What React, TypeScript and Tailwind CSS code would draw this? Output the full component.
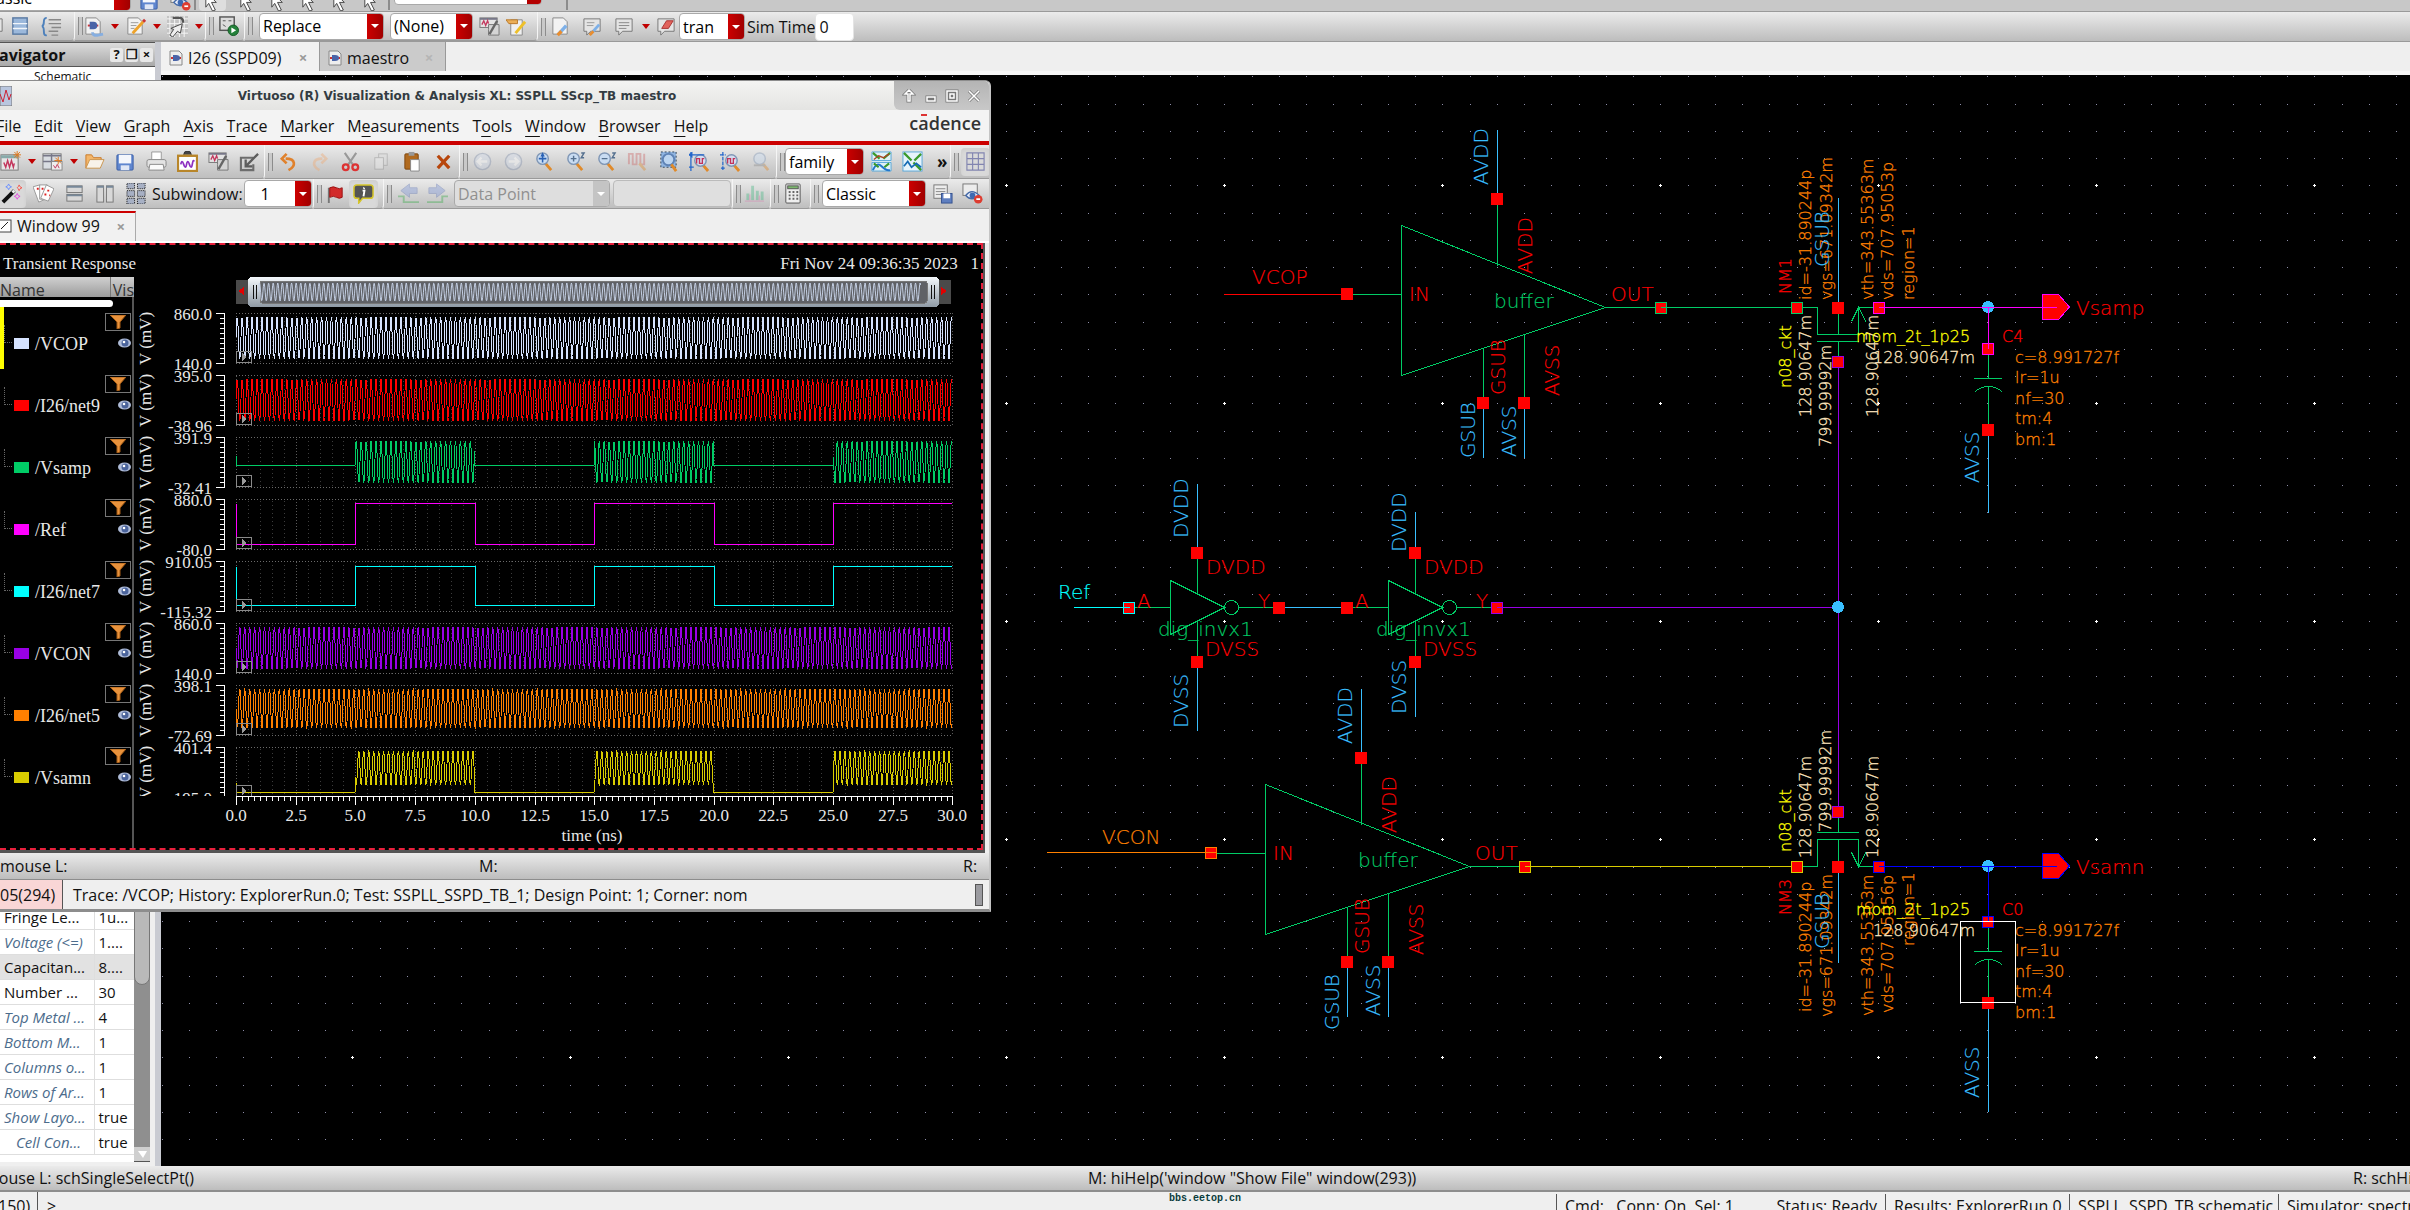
import type { ReactNode } from "react";
import clsx from "clsx";

/* ---------- colours of the drawing layers ---------- */

const GREEN = "#00cc66";
const SKY = "#39bfff";
const RED = "#ff0000";
const PURPLE = "#9900e6";
const MAGENTA = "#ff00ff";
const OLIVE = "#d9cc00";
const ORANGE = "#ff8000";
const CREAM = "#ffe6bf";
const YELLOW = "#ffff00";
const CYAN = "#00ffff";
const BLUE = "#0000ff";

const uiFont = "font-['Open_Sans','Noto_Sans',sans-serif]";
const plotFont = "font-['Liberation_Serif',serif]";
const barBg = "bg-linear-to-b from-[#ebebeb] to-[#bdbdbd]";

/* ---------- icons ---------- */

const Svg = ({ children, faded }: { children: ReactNode; faded?: boolean }) => (
  <svg
    viewBox="0 0 22 22"
    className={clsx("h-[21px] w-[21px] shrink-0", faded && "opacity-40")}
    fill="none"
    aria-hidden="true"
  >
    {children}
  </svg>
);

const Lens = ({ children }: { children?: ReactNode }) => (
  <>
    <path d="M12 13l6 7" stroke="#e08a2a" strokeWidth="3" />
    <circle cx="9" cy="8" r="6" fill="#c9dcf2" stroke="#7f96b5" strokeWidth="1.5" />
    {children}
  </>
);

const Page = ({ children }: { children?: ReactNode }) => (
  <>
    <path d="M3 2h11l4 4v13H3z" fill="#f2f2f2" stroke="#888" />
    {children}
  </>
);

const Cursor = () => <path d="M4 2l11 11h-5l4 8-3 1-4-8-3 4z" fill="#fff" stroke="#444" />;

const icons: Record<string, ReactNode> = {
  newWindow: (
    <>
      <rect x="1" y="4" width="18" height="16" fill="#e6e6e6" stroke="#777" />
      <path d="M1 6h18" stroke="#8aa" strokeWidth="3" />
      <path d="M4 12l2 5 2-7 2 7 2-7 2 7 1-4" stroke="#c3375d" strokeWidth="1.5" />
      <path d="M18 0v8M14 4h8M15 1l6 6M21 1l-6 6" stroke="#e07a20" />
    </>
  ),
  newSub: (
    <>
      <rect x="1" y="3" width="19" height="16" fill="#d9dde2" stroke="#777" />
      <path d="M1 5h19M1 11h19M10 3v16" stroke="#778" strokeWidth="1.5" />
      <rect x="10" y="11" width="11" height="9" fill="#eee" stroke="#888" />
      <path d="M12 15l2 3 2-4 2 4" stroke="#c3375d" />
      <path d="M17 6v8M13 10h8M14 7l6 6" stroke="#e07a20" />
    </>
  ),
  folder: (
    <>
      <path d="M2 18V4h6l2 3h8v4" fill="#f3b66b" stroke="#c97b2a" />
      <path d="M2 18L6 9h15l-4 9z" fill="#f8f3ea" stroke="#c9954f" />
    </>
  ),
  save: (
    <>
      <rect x="2" y="4" width="17" height="16" rx="1" fill="#5f86cf" stroke="#3b5ea6" />
      <rect x="4" y="4" width="13" height="9" fill="#f4f6fb" />
      <rect x="6" y="15" width="9" height="5" fill="#dfe6f5" />
    </>
  ),
  print: (
    <>
      <path d="M6 9V1h10v8" fill="#fff" stroke="#999" />
      <rect x="1" y="9" width="20" height="8" rx="2" fill="#e3e3e3" stroke="#888" />
      <path d="M4 14h14l1 6H3z" fill="#fafafa" stroke="#888" />
    </>
  ),
  clipWave: (
    <>
      <path d="M7 4a4 4 0 018 0" fill="#444" stroke="#333" />
      <rect x="1" y="5" width="20" height="16" fill="#fff" stroke="#b8862a" strokeWidth="2.5" />
      <path d="M4 14q1-6 3 0t3 0 3 0 3 0 2-3" stroke="#8d2fc0" strokeWidth="1.8" />
    </>
  ),
  wavePen: (
    <>
      <rect x="1" y="2" width="18" height="10" fill="#e4e4e4" stroke="#777" />
      <path d="M1 3h18" stroke="#778" strokeWidth="2" />
      <path d="M3 9l2-4 2 5 2-5 1 3" stroke="#c3375d" strokeWidth="1.4" />
      <path d="M10 14V9h11v11H10z" fill="#d5d5d5" stroke="#777" />
      <path d="M19 5l-8 14" stroke="#666" strokeWidth="2.5" />
    </>
  ),
  resize: (
    <>
      <path d="M15 7H2v13h13v-6" stroke="#6d6d6d" strokeWidth="2.2" />
      <path d="M20 3l-12 12M7 9v7h7" stroke="#5d5d5d" strokeWidth="2.4" />
    </>
  ),
  undo: <path d="M11 20c8-4 8-12-3-12M9 3L4 8l5 5" stroke="#e0812c" strokeWidth="2.8" />,
  redo: <path d="M11 20c-8-4-8-12 3-12M13 3l5 5-5 5" stroke="#f0a870" strokeWidth="2.8" />,
  cut: (
    <>
      <path d="M5 2l9 13M17 2L8 15" stroke="#999" strokeWidth="2.2" />
      <circle cx="6" cy="17" r="3" stroke="#d33" strokeWidth="2.4" />
      <circle cx="16" cy="17" r="3" stroke="#d33" strokeWidth="2.4" />
    </>
  ),
  copy: (
    <>
      <rect x="8" y="3" width="9" height="12" fill="#ddd" stroke="#888" />
      <rect x="4" y="7" width="9" height="12" fill="#eee" stroke="#888" />
    </>
  ),
  paste: (
    <>
      <rect x="3" y="3" width="14" height="16" rx="1" fill="#b06a1f" stroke="#7d4610" />
      <rect x="7" y="1" width="6" height="4" fill="#999" />
      <path d="M9 9h9v12H9z" fill="#fff" stroke="#888" />
    </>
  ),
  remove: <path d="M5 5l12 13M17 5L5 18" stroke="#b8460c" strokeWidth="3.4" />,
  back: (
    <>
      <circle cx="11" cy="11" r="8.5" fill="#cfd8e8" stroke="#7f8eaa" strokeWidth="1.5" />
      <path d="M16 11H7M10 7l-4 4 4 4" stroke="#fff" strokeWidth="2.4" />
    </>
  ),
  forward: (
    <>
      <circle cx="11" cy="11" r="8.5" fill="#cfd8e8" stroke="#7f8eaa" strokeWidth="1.5" />
      <path d="M6 11h9M12 7l4 4-4 4" stroke="#fff" strokeWidth="2.4" />
    </>
  ),
  fit: <Lens><path d="M9 4v8M5 8h8M9 3l-1 2h2z" stroke="#2a62b5" strokeWidth="1.6" /></Lens>,
  zoomIn: <Lens><path d="M9 5v6M6 8h6M17 2h3l-3 5h3" stroke="#55708f" strokeWidth="1.5" /></Lens>,
  zoomOut: <Lens><path d="M6 8h6M17 2h3l-3 5h3" stroke="#55708f" strokeWidth="1.5" /></Lens>,
  waves: (
    <>
      <path d="M2 14V3h4v11h4V3h4v11h4V3" stroke="#c66" strokeWidth="2" />
      <path d="M13 13l6 7" stroke="#e08a2a" strokeWidth="3" />
    </>
  ),
  zoomBox: (
    <>
      <rect x="3" y="1" width="16" height="16" fill="#8fb4e0" stroke="#345" strokeDasharray="2 2" />
      <circle cx="11" cy="9" r="6" fill="#bcd5f0" stroke="#5f83b5" strokeWidth="2" />
      <path d="M14 14l5 7" stroke="#e08a2a" strokeWidth="3" />
    </>
  ),
  zoomX: (
    <>
      <path d="M14 14l6 7" stroke="#e08a2a" strokeWidth="3" />
      <circle cx="12" cy="10" r="6" fill="#d5dcee" stroke="#7f96b5" strokeWidth="1.5" />
      <path d="M8 13V8h3v5h3V8h2" stroke="#c2335a" strokeWidth="1.4" />
      <path d="M2 1v20M0 4h16M0 4l3-2v4zM0 17h5" stroke="#26c" strokeWidth="1.3" />
    </>
  ),
  zoomY: (
    <>
      <path d="M14 14l6 7" stroke="#e08a2a" strokeWidth="3" />
      <circle cx="12" cy="10" r="6" fill="#d5dcee" stroke="#7f96b5" strokeWidth="1.5" />
      <path d="M8 13V8h3v5h3V8h2" stroke="#c2335a" strokeWidth="1.4" />
      <path d="M3 1v20M0 4h6M1 18h5" stroke="#26c" strokeWidth="1.3" strokeDasharray="4 1" />
    </>
  ),
  zoomHand: <Lens><path d="M3 15h12" stroke="#888" strokeWidth="2" /></Lens>,
  cross: (
    <>
      <rect x="1" y="1" width="20" height="20" fill="#dff0f6" />
      <path d="M1 1h20v9H1zM1 12h20v9H1z" stroke="#58a7d8" />
      <path d="M2 2l7 6M20 2l-7 6" stroke="#3a9a2c" strokeWidth="2.2" />
      <path d="M3 9l5-4 5 2 6-4" stroke="#a42" strokeWidth="1.4" />
      <path d="M2 20q4-9 9-4t9 4" stroke="#27c" strokeWidth="2" />
      <path d="M3 13l5 4M19 13l-5 4" stroke="#3a9a2c" strokeWidth="2.2" />
    </>
  ),
  merge: (
    <>
      <rect x="1" y="1" width="20" height="20" fill="#e6f3fb" stroke="#58a7d8" />
      <path d="M2 2l8 8M20 20l-8-8M20 3l-7 7" stroke="#3a9a2c" strokeWidth="2.4" />
      <path d="M2 16l4-5 4 6 5-4 5 4" stroke="#146bb5" strokeWidth="1.8" />
    </>
  ),
  grid: (
    <path d="M2 2h18v18H2zM8 2v18M14 2v18M2 8h18M2 14h18" stroke="#8285b0" strokeWidth="1.2" />
  ),
  wand: (
    <>
      <path d="M2 20L14 8" stroke="#111" strokeWidth="4" />
      <path d="M12 10l2-2" stroke="#eee" strokeWidth="3" />
      <path d="M8 1l1 2 2 1-2 1-1 2-1-2-2-1 2-1z" stroke="#6a8fff" />
      <path d="M19 2l1 2 2 1-2 1-1 2-1-2-1-1 1-1z" stroke="#f4584f" />
      <path d="M17 11l1 2 2 1-2 1-1 2-1-2-2-1 2-1z" stroke="#e34ae0" />
    </>
  ),
  cards: (
    <>
      <path d="M0 4l7-2 6 15-7 3z" fill="#fff" stroke="#999" />
      <path d="M7 2h8v15H7z" fill="#fff" stroke="#999" />
      <path d="M14 2l8 4-6 13-8-3z" fill="#fff" stroke="#999" />
      <path d="M4 6h2M9 6h2M15 8h2M12 12h2M17 13h1" stroke="#d22" strokeWidth="2" />
    </>
  ),
  rows: (
    <>
      <rect x="3" y="3" width="16" height="7" fill="#d8d8d8" stroke="#777" />
      <rect x="3" y="12" width="16" height="7" fill="#d8d8d8" stroke="#777" />
      <path d="M3 4h16M3 13h16" stroke="#789" strokeWidth="2" />
    </>
  ),
  cols: (
    <>
      <rect x="2" y="3" width="7" height="17" fill="#d8d8d8" stroke="#777" />
      <rect x="12" y="3" width="7" height="17" fill="#d8d8d8" stroke="#777" />
      <path d="M2 4h7M12 4h7" stroke="#789" strokeWidth="2" />
    </>
  ),
  tiles: (
    <g fill="#a7b0c4" stroke="#111" strokeDasharray="1 1">
      <rect x="1" y="0" width="8" height="6" />
      <rect x="12" y="0" width="8" height="6" />
      <rect x="1" y="8" width="8" height="6" />
      <rect x="12" y="8" width="8" height="6" />
      <rect x="1" y="16" width="8" height="6" />
      <rect x="12" y="16" width="8" height="6" />
    </g>
  ),
  flag: (
    <>
      <path d="M4 5v16" stroke="#777" strokeWidth="2" />
      <path d="M5 5q4-2 7 0t6 0v10q-3 2-6 0t-7 0z" fill="#d22a2a" stroke="#911" />
    </>
  ),
  info: (
    <>
      <path d="M4 2h14q3 0 3 3v8q0 3-3 3h-8l-4 5v-5H4q-3 0-3-3V5q0-3 3-3z" fill="#545454" stroke="#d5c52a" strokeWidth="1.6" />
      <path d="M12 5l-1 1M10 8h2l-1 6" stroke="#fff" strokeWidth="2" />
    </>
  ),
  stepLeft: (
    <>
      <path d="M20 5h-8V1L3 8l9 7v-4h8z" fill="#7f97d8" stroke="#5e74b5" />
      <path d="M0 14h6v6h16" stroke="#3bab4b" strokeWidth="2" />
    </>
  ),
  stepRight: (
    <>
      <path d="M2 5h8V1l9 7-9 7v-4H2z" fill="#7f97d8" stroke="#5e74b5" />
      <path d="M0 20h16v-6h6" stroke="#3bab4b" strokeWidth="2" />
    </>
  ),
  bars: (
    <>
      <path d="M4 18v-7M9 18V3M14 18V8M19 18v-9" stroke="#48b884" strokeWidth="3" />
      <path d="M1 19h20M6 18v-6M16 18v-5" stroke="#d87cae" strokeWidth="1.5" />
    </>
  ),
  calc: (
    <>
      <rect x="4" y="1" width="15" height="20" rx="1" fill="#eee" stroke="#555" />
      <rect x="6" y="3" width="11" height="3" fill="#7cb86e" stroke="#555" />
      <path d="M7 9.500h10M7 13h10M7 16.500h10" stroke="#666" strokeWidth="2" strokeDasharray="2 2" />
    </>
  ),
  listSave: (
    <>
      <rect x="2" y="2" width="14" height="14" fill="#ececec" stroke="#777" />
      <path d="M4 6h10M4 9h10M4 12h6" stroke="#888" />
      <rect x="10" y="11" width="11" height="10" fill="#5f7fc0" stroke="#35528f" />
      <rect x="12" y="11" width="7" height="5" fill="#fff" />
    </>
  ),
  eyeRemove: (
    <>
      <rect x="1" y="1" width="15" height="12" fill="#ececec" stroke="#777" />
      <path d="M4 13q6-8 14 0-8 7-14 0z" fill="#e8eefb" stroke="#466ba8" strokeWidth="1.5" />
      <circle cx="11" cy="13" r="3" fill="#3e6ab2" />
      <circle cx="17" cy="17" r="4.500" fill="#dd3c30" />
      <path d="M15 17h4" stroke="#fff" strokeWidth="1.8" />
    </>
  ),
  layers: (
    <>
      <rect x="3" y="2" width="15" height="17" fill="#9bb8db" stroke="#5a7aa3" strokeWidth="1.5" />
      <path d="M3 8h15M3 13h15" stroke="#f1f5fa" strokeWidth="1.5" />
    </>
  ),
  braces: (
    <>
      <path d="M6 2Q3 2 3 6t-2 5q2 0 2 5t3 4" stroke="#4d80bb" strokeWidth="2" />
      <path d="M8 4h13M8 8h13M11 12h10M8 16h10M11 20h7" stroke="#888" strokeWidth="1.5" />
    </>
  ),
  schematic: (
    <Page>
      <path d="M5 10h11" stroke="#c33" strokeWidth="2" />
      <path d="M7 6h4q4 0 4 4t-4 4H7z" fill="#4a64a8" />
      <path d="M10 17q0 4 6 3l5-1" stroke="#86aee0" strokeWidth="3" />
    </Page>
  ),
  pagePen: (
    <Page>
      <path d="M6 7h8M6 10h6M6 13h4" stroke="#999" />
      <path d="M19 6L8 18" stroke="#eea32a" strokeWidth="3" />
      <path d="M19 6l2-2" stroke="#c33" strokeWidth="3" />
    </Page>
  ),
  gridCursor: (
    <>
      <rect width="22" height="22" fill="#c4c4c4" />
      <path d="M0 3h22M0 8h22M0 13h22M0 18h22M3 0v22M8 0v22M13 0v22M18 0v22" stroke="#f7f7f7" />
      <path d="M6 2h7q4 0 4 5" stroke="#555" strokeWidth="2.5" />
      <path d="M3 20l4-6-3-1 12-5-2 10-3-2-5 6z" fill="#eee" stroke="#444" />
    </>
  ),
  play: (
    <>
      <rect x="2" y="1" width="15" height="14" fill="#dcdcdc" stroke="#555" strokeWidth="1.5" />
      <path d="M5 5h3M11 5h3M5 9l3 2" stroke="#555" />
      <circle cx="16" cy="15" r="5.500" fill="#24813a" stroke="#145a24" />
      <path d="M14 12l5 3-5 3z" fill="#fff" />
    </>
  ),
  pageStar: (
    <>
      <path d="M5 4h12v16H5z" fill="#f0f0f0" stroke="#888" />
      <path d="M0 4h12v4H3z" fill="#ecaf58" stroke="#b9792a" />
      <path d="M20 6L10 18" stroke="#eec02a" strokeWidth="3" />
    </>
  ),
  wrench: (
    <Page>
      <path d="M9 19l8-9" stroke="#7db0e8" strokeWidth="3.500" />
      <path d="M8 20l4-4" stroke="#e98d2e" strokeWidth="3.500" />
    </Page>
  ),
  chatWrench: (
    <>
      <path d="M2 3h17v13H9l-4 4v-4H2z" fill="#e4e4e4" stroke="#777" />
      <path d="M5 7h8M5 10h7" stroke="#999" />
      <path d="M9 19l9-10" stroke="#7db0e8" strokeWidth="3" />
      <path d="M8 20l4-4" stroke="#e98d2e" strokeWidth="3" />
    </>
  ),
  chat: (
    <>
      <path d="M2 3h17v13H9l-4 4v-4H2z" fill="#e4e4e4" stroke="#777" />
      <path d="M5 7h11M5 10h11M5 13h8" stroke="#888" />
    </>
  ),
  eraser: (
    <>
      <path d="M2 3h17v13H9l-4 4v-4H2z" fill="#e4e4e4" stroke="#777" />
      <path d="M6 13l5-8h7l-5 8z" fill="#e2635c" stroke="#a33" />
    </>
  ),
  cursor: <Cursor />,
};

const Icon = ({ name, faded }: { name: string; faded?: boolean }) => (
  <Svg faded={faded}>{icons[name]}</Svg>
);

const IconButton = ({ name, faded, pressed }: { name: string; faded?: boolean; pressed?: boolean }) => (
  <button
    type="button"
    aria-label={name}
    className={clsx(
      "flex shrink-0 items-center justify-center",
      pressed && "h-[28px] w-[29px] rounded bg-[#d9d9d9] shadow-inner"
    )}
  >
    <Icon name={name} faded={faded} />
  </button>
);

const MenuCaret = () => (
  <button type="button" aria-label="more" className="flex w-[21px] shrink-0 justify-center">
    <svg viewBox="0 0 8 5" className="h-[5px] w-[8px]">
      <path d="M0 0h8L4 5z" fill="#c00000" />
    </svg>
  </button>
);

const Handle = () => (
  <span className="h-[18px] w-[5px] shrink-0 border-x border-[#8c8c8c] bg-[#c9c9c9]" />
);

const Group = ({ className, children }: { className?: string; children: ReactNode }) => (
  <div
    className={clsx(
      "flex shrink-0 items-center rounded-br border-r border-b border-[#9a9a9a] border-r-[#f5f5f5]",
      className
    )}
  >
    {children}
  </div>
);

const Combo = ({
  label,
  value,
  className,
  disabled,
}: {
  label: string;
  value: string;
  className: string;
  disabled?: boolean;
}) => (
  <div
    className={clsx(
      "flex h-[27px] shrink-0 overflow-hidden rounded border border-[#a9a9a9]",
      disabled ? "bg-[#dedede]" : "bg-white",
      className
    )}
  >
    <select
      aria-label={label}
      disabled={disabled}
      className={clsx(
        "min-w-0 flex-1 appearance-none bg-transparent pl-[3px] text-[16px] leading-[24px] outline-none",
        disabled ? "text-[#909090]" : "text-black"
      )}
    >
      <option>{value}</option>
    </select>
    <span
      className={clsx(
        "flex w-[16px] items-center justify-center",
        disabled ? "bg-[#c4c4c4]" : "bg-linear-to-r from-[#cc0000] to-[#a00000]"
      )}
    >
      <svg viewBox="0 0 8 4" className="h-[4px] w-[8px]">
        <path d="M0 0h8L4 4z" fill="#fff" />
      </svg>
    </span>
  </div>
);

/* ---------- main window chrome ---------- */

const TopToolbar = () => (
  <div className="flex h-[12px] items-end overflow-hidden border-b border-[#9a9a9a] bg-[#c8c8c8]">
    <div className="-ml-[22px] flex shrink-0">
      <Combo label="Workspace" value="Classic" className="w-[153px]" />
    </div>
    <div className="ml-[8px] flex shrink-0 items-end gap-[10px]">
      <Icon name="save" />
      <Icon name="eyeRemove" />
    </div>
    <span className="ml-[3px]"><Handle /></span>
    <span className="mx-[3px] shrink-0 rounded-b bg-[#dedede] px-[3px]"><Icon name="cursor" /></span>
    <div className="ml-[8px] flex shrink-0 gap-[10px]">
      <Icon name="cursor" />
      <Icon name="cursor" />
      <Icon name="cursor" />
      <Icon name="cursor" />
      <Icon name="cursor" />
    </div>
    <span className="mr-[4px] ml-[6px]"><Handle /></span>
    <div className="mb-[6px] flex h-[27px] w-[148px] shrink-0 items-center overflow-hidden rounded-b border border-[#a9a9a9] bg-white">
      <input
        aria-label="Search"
        placeholder="Search"
        className="w-full min-w-0 pl-[20px] text-[16px] outline-none placeholder:text-[#b5b5b5]"
      />
      <span className="h-full w-[14px] shrink-0 bg-[#b40000]" />
    </div>
    <span className="ml-[24px]"><Handle /></span>
  </div>
);

const MainToolbar = () => (
  <div className={clsx("flex h-[30px] border-b border-[#9a9a9a]", barBg)}>
    <Group className="w-[75px] gap-[10px] overflow-hidden">
      <span className="-mr-[5px] -ml-[16px] flex"><IconButton name="chat" /></span>
      <IconButton name="layers" />
      <IconButton name="braces" />
    </Group>
    <Group className="w-[131px] pl-[3px]">
      <Handle />
      <span className="w-[4px]" />
      <IconButton name="schematic" />
      <MenuCaret />
      <IconButton name="pagePen" />
      <MenuCaret />
      <IconButton name="gridCursor" />
      <MenuCaret />
    </Group>
    <Group className="w-[39px] gap-[4px] pl-[3px]">
      <Handle />
      <IconButton name="play" />
    </Group>
    <Group className="w-[293px] gap-[6px] pl-[3px]">
      <Handle />
      <Combo label="Results mode" value="Replace" className="w-[125px]" />
      <Combo label="History" value="(None)" className="w-[83px]" />
      <IconButton name="wavePen" />
      <IconButton name="pageStar" />
    </Group>
    <div className="flex flex-1 items-center pl-[3px]">
      <Handle />
      <div className="ml-[4px] flex gap-[11px]">
        <IconButton name="wrench" />
        <IconButton name="chatWrench" />
        <IconButton name="chat" />
      </div>
      <MenuCaret />
      <IconButton name="eraser" />
      <span className="w-[2px]" />
      <Combo label="Analysis" value="tran" className="w-[66px]" />
      <label htmlFor="sim-time" className="pl-[2px] text-[16px] whitespace-nowrap">
        Sim Time
      </label>
      <input
        id="sim-time"
        defaultValue="0"
        className="h-[28px] w-[39px] rounded border border-[#e4e4e4] bg-white pl-[3px] text-[16px]"
      />
    </div>
  </div>
);

const params: { name: string; value: string; derived?: boolean; shaded?: boolean; indent?: boolean }[] = [
  { name: "Fringe Le...", value: "1u..." },
  { name: "Voltage (<=)", value: "1....", derived: true },
  { name: "Capacitan...", value: "8....", shaded: true },
  { name: "Number ...", value: "30" },
  { name: "Top Metal ...", value: "4", derived: true },
  { name: "Bottom M...", value: "1", derived: true },
  { name: "Columns o...", value: "1", derived: true },
  { name: "Rows of Ar...", value: "1", derived: true },
  { name: "Show Layo...", value: "true", derived: true },
  { name: "Cell Con...", value: "true", derived: true, indent: true },
];

const SidePanel = () => (
  <aside className="flex w-[161px] shrink-0 flex-col overflow-hidden border-r-[6px] border-[#c9cbd2] bg-[#efefef]">
    <div className="flex h-[25px] shrink-0 items-center border-y border-[#555] bg-linear-to-b from-[#dcdcdc] to-[#a9a9a9]">
      <h2 className="-ml-[14px] flex-1 text-[16px] font-bold">Navigator</h2>
      {["?", "❐", "×"].map((t) => (
        <button
          key={t}
          type="button"
          className="mr-[2px] h-[14px] w-[13px] rounded-xs bg-[#e8e8e8] text-[13px] leading-[13px] font-bold"
        >
          {t}
        </button>
      ))}
    </div>
    <div className="bg-white pl-[34px] text-[12px] leading-[20px]">Schematic</div>
    <div className="mb-[4px] flex min-h-0 flex-1 items-stretch bg-white">
      <div className="flex flex-1 flex-col justify-end overflow-hidden">
        <table className="w-full table-fixed border-collapse text-[15px]">
          <tbody>
            {params.map((p) => (
              <tr
                key={p.name}
                className={clsx("h-[25px] border-b border-[#dedede]", p.shaded && "bg-[#e2e2e2]")}
              >
                <th
                  scope="row"
                  className={clsx(
                    "w-[94px] border-r border-[#dedede] p-0 text-left font-normal whitespace-nowrap",
                    p.indent ? "pl-[16px]" : "pl-[4px]",
                    p.derived && "text-[#4c6c8c] italic"
                  )}
                >
                  {p.name}
                </th>
                <td className="p-0 pl-[4px] whitespace-nowrap">{p.value}</td>
              </tr>
            ))}
          </tbody>
        </table>
        <div className="h-[7px] shrink-0" />
      </div>
      <div className="flex w-[16px] flex-col bg-[#8f8f8f]">
        <div className="flex-1 rounded-b-full border border-[#777] bg-[#b9b9b9]" />
        <div className="h-[162px]" />
        <button
          type="button"
          aria-label="Scroll down"
          className="flex h-[15px] items-center justify-center border-b border-[#555] bg-[#cfcfcf]"
        >
          <svg viewBox="0 0 9 7" className="h-[7px] w-[9px]">
            <path d="M0 0h9L5 7z" fill="#fff" />
          </svg>
        </button>
      </div>
      <div className="w-[5px] bg-[#efefef]" />
    </div>
  </aside>
);

const DocTab = ({ title, active }: { title: string; active?: boolean }) => (
  <div
    className={clsx(
      "flex h-full items-center border-r border-[#999] pt-[2px]",
      active ? "w-[159px] bg-[#f1f1f1]" : "w-[126px] bg-[#cbcbcb]"
    )}
  >
    <span className="mr-[5px] ml-[8px]">
      <svg viewBox="0 0 14 16" className="h-[16px] w-[14px]">
        <path d="M1 1h9l3 3v11H1z" fill="#eee" stroke="#888" />
        <path d="M2 8h10" stroke="#c33" strokeWidth="2" />
        <path d="M4 5h3q4 0 4 3t-4 3H4z" fill="#4a64a8" />
      </svg>
    </span>
    <button type="button" className="flex-1 text-left text-[16px] whitespace-nowrap">
      {title}
    </button>
    <button
      type="button"
      aria-label={`Close ${title}`}
      className={clsx("w-[24px] pr-[8px] text-[15px] font-bold", active ? "text-[#999]" : "text-[#b5b5b5]")}
    >
      ×
    </button>
  </div>
);

/* ---------- schematic ---------- */

const Pin = ({ x, y, net = RED }: { x: number; y: number; net?: string }) => (
  <rect x={x - 5.5} y={y - 5.5} width="11" height="11" fill={RED} stroke={net} />
);

const Wire = ({ d, c }: { d: string; c: string }) => <path d={d} stroke={c} fill="none" />;

const Label = ({
  x,
  y,
  c,
  t,
  up,
  small,
}: {
  x: number;
  y: number;
  c: string;
  t: string;
  up?: boolean;
  small?: boolean;
}) => (
  <text
    x={x}
    y={y}
    fill={c}
    stroke={c}
    strokeWidth={small ? 0.3 : 0.15}
    transform={up ? `rotate(-90 ${x} ${y})` : undefined}
    className={small ? "text-[16px]" : "text-[20px]"}
  >
    {t}
  </text>
);

// dotted canvas grid, every eighth dot in both directions is a cross
const PITCH = 27.25;
const gridDots = () => {
  let minor = "";
  let major = "";
  for (let i = -39; i < 60; i++) {
    for (let j = -4; j < 44; j++) {
      const x = Math.round(1224.3 + i * PITCH);
      const y = Math.round(185.4 + j * PITCH);
      if (i % 8 === 0 && j % 8 === 0) major += `M${x - 1} ${y}.5h3M${x}.5 ${y - 1}v3`;
      else minor += `M${x} ${y}.5h1`;
    }
  }
  return { minor, major };
};
const dots = gridDots();

const Buffer = ({ dx, dy, gsubY, out, input }: { dx: number; dy: number; gsubY: number; out: string; input: string }) => (
  <g transform={`translate(${dx} ${dy})`}>
    <Wire c={GREEN} d="M1401.5 225.500V375.500L1605.500 307.500ZM1347 294.500H1401M1497.500 199V266M1483.500 348V403M1524.500 334V403M1605 307.500H1661" />
    <Wire c={SKY} d="M1497.5 130V199M1483.500 403V458M1524.500 403V458" />
    <Pin x={1497} y={199} />
    <Pin x={1483} y={403} />
    <Pin x={1524} y={403} />
    <Pin x={1347} y={294} net={input} />
    <Pin x={1661} y={308} net={out} />
    <Label x={1488} y={185} c={SKY} t="AVDD" up />
    <Label x={1532} y={274} c={RED} t="AVDD" up />
    <Label x={1505} y={395} c={RED} t="GSUB" up />
    <Label x={1559} y={396} c={RED} t="AVSS" up />
    <Label x={1475} y={gsubY} c={SKY} t="GSUB" up />
    <Label x={1516} y={457} c={SKY} t="AVSS" up />
    <Label x={1409} y={301} c={RED} t="IN" />
    <Label x={1494} y={308} c={GREEN} t="buffer" />
    <Label x={1611} y={301} c={RED} t="OUT" />
  </g>
);

const Inverter = ({ dx, top, bottom, a, y }: { dx: number; top: number; bottom: number; a: string; y: string }) => (
  <g transform={`translate(${dx} 0)`}>
    <Wire c={GREEN} d="M1170.5 580.500V634.500L1224.500 607.500ZM1129 607.500H1170M1239 607.500H1279M1197.500 553V593M1197.500 621V662" />
    <circle cx="1231.500" cy="607.500" r="7" stroke={GREEN} fill="none" />
    <Wire c={SKY} d={`M1197.5 ${top}V553M1197.500 662V${bottom}`} />
    <Pin x={1197} y={553} />
    <Pin x={1197} y={662} />
    <Pin x={1129} y={608} net={a} />
    <Pin x={1279} y={608} net={y} />
    <Label x={1188} y={top === 484 ? 538 : 552} c={SKY} t="DVDD" up />
    <Label x={1188} y={bottom - 3} c={SKY} t="DVSS" up />
    <Label x={1206} y={574} c={RED} t="DVDD" />
    <Label x={1205} y={656} c={RED} t="DVSS" />
    <Label x={1137} y={608} c={RED} t="A" />
    <Label x={1258} y={608} c={RED} t="Y" />
    <Label x={1158} y={636} c={GREEN} t="dig_invx1" />
  </g>
);

const Capacitor = ({ dy, name, net, end, avss }: { dy: number; name: string; net: string; end: number; avss: number }) => (
  <g transform={`translate(0 ${dy})`}>
    <Wire c={GREEN} d="M1988.5 349V378M1974 378.500H2002M1975 391.500Q1988.500 381.500 2002 391.500M1988.500 387V430" />
    <Wire c={SKY} d={`M1988.5 430V${end}`} />
    <Pin x={1988} y={349} net={net} />
    <Pin x={1988} y={430} />
    <Label x={1979} y={avss} c={SKY} t="AVSS" up />
    <Label x={1856} y={342} c={YELLOW} t="mom_2t_1p25" small />
    <Label x={1873} y={363} c={CREAM} t="128.90647m" small />
    <Label x={2002} y={342} c={RED} t={name} small />
    {["c=8.991727f", "lr=1u", "nf=30", "tm:4", "bm:1"].map((t, i) => (
      <Label key={t} x={2015} y={363 + Math.round(i * 20.4)} c={ORANGE} t={t} small />
    ))}
  </g>
);

const OutPort = ({ y, net, t }: { y: number; net: string; t: string }) => (
  <>
    <circle cx="1988" cy={y} r="6" fill={SKY} stroke="none" />
    <path d={`M2042.5 ${y - 12.5}h16l11 12.500l-11 12.500h-16z`} fill={RED} stroke={net} />
    <Wire c={net} d={`M1879 ${y}.5H2057`} />
    <Label x={2076} y={y + 8} c={RED} t={t} />
  </>
);

const nm1: [number, number, string, string][] = [
  [1791, 294, RED, "NM1"],
  [1811, 300, ORANGE, "id=-31.890244p"],
  [1832, 300, ORANGE, "vgs=671.09342m"],
  [1873, 300, ORANGE, "vth=343.55363m"],
  [1893, 300, ORANGE, "vds=707.95053p"],
  [1914, 300, ORANGE, "region=1"],
  [1791, 388, YELLOW, "n08_ckt"],
  [1811, 417, CREAM, "128.90647m"],
  [1831, 447, CREAM, "799.99992m"],
  [1878, 417, CREAM, "128.90647m"],
];

const nm3: [number, number, string, string][] = [
  [1791, 915, RED, "NM3"],
  [1811, 1012, ORANGE, "id=-31.890244p"],
  [1832, 1017, ORANGE, "vgs=671.09342m"],
  [1873, 1016, ORANGE, "vth=343.55363m"],
  [1893, 1013, ORANGE, "vds=707.95056p"],
  [1914, 946, ORANGE, "region=1"],
  [1791, 852, YELLOW, "n08_ckt"],
  [1811, 858, CREAM, "128.90647m"],
  [1831, 832, CREAM, "799.99992m"],
  [1878, 858, CREAM, "128.90647m"],
];

const Schematic = () => (
  <div className="min-h-0 flex-1 overflow-hidden bg-black">
    <svg
      className="h-full w-full font-['DejaVu_Sans',sans-serif] font-extralight"
      role="img"
      aria-label="SSPD schematic"
    >
      <g transform="translate(-161 -75)" shapeRendering="crispEdges">
        <path d={dots.minor} stroke="#8d8da8" />
        <path d={dots.major} stroke="#ffffff" />

        <Buffer dx={0} dy={0} gsubY={458} input={RED} out={GREEN} />
        <Buffer dx={-136} dy={559} gsubY={471} input={ORANGE} out={OLIVE} />
        <Inverter dx={0} top={484} bottom={731} a={CYAN} y={RED} />
        <Inverter dx={218} top={512} bottom={717} a={RED} y={PURPLE} />

        {/* nets */}
        <Wire c={RED} d="M1224 294.500H1347" />
        <Wire c={ORANGE} d="M1047 852.500H1217" />
        <Wire c={CYAN} d="M1074 607.500H1130" />
        <Wire c={SKY} d="M1285 607.500H1341" />
        <Wire c={GREEN} d="M1661 307.500H1797" />
        <Wire c={OLIVE} d="M1525 866.500H1797" />
        <Wire c={PURPLE} d="M1497 607.500H1838.500M1838.500 362V811" />
        <Label x={1252} y={284} c={RED} t="VCOP" />
        <Label x={1102} y={844} c={ORANGE} t="VCON" />
        <Label x={1058} y={599} c={CYAN} t="Ref" />

        {/* NM1 */}
        <Wire c={GREEN} d="M1797 307.500H1817.500V334.500H1858.500V307.500H1879M1817 341.500H1859M1838.500 308V334M1838.500 341V362M1851.500 321.500L1858.500 307.500L1866 321.500" />
        <Wire c={SKY} d="M1838.5 198V308" />
        <Pin x={1797} y={308} net={GREEN} />
        <Pin x={1838} y={308} />
        <Pin x={1838} y={362} net={PURPLE} />
        <Pin x={1879} y={308} net={MAGENTA} />
        {nm1.map(([x, y, c, t]) => (
          <Label key={`${x}-${y}`} x={x} y={y} c={c} t={t} up small />
        ))}
        <Label x={1829} y={267} c={SKY} t="GSUB" up />

        {/* NM3 */}
        <Wire c={GREEN} d="M1797 866.500H1817.500V839.500H1858.500V866.500H1879M1817 832.500H1859M1838.500 839V867M1838.500 812V832M1851.500 852.500L1858.500 866.500L1866 852.500" />
        <Wire c={SKY} d="M1838.5 867V963" />
        <Pin x={1797} y={867} net={OLIVE} />
        <Pin x={1838} y={867} />
        <Pin x={1838} y={812} net={PURPLE} />
        <Pin x={1879} y={867} net={BLUE} />
        {nm3.map(([x, y, c, t]) => (
          <Label key={`${x}-${y}`} x={x} y={y} c={c} t={t} up small />
        ))}
        <Label x={1829} y={949} c={SKY} t="GSUB" up />

        <Capacitor dy={0} name="C4" net={MAGENTA} end={513} avss={483} />
        <Capacitor dy={573} name="C0" net={BLUE} end={539} avss={525} />
        <OutPort y={307} net={MAGENTA} t="Vsamp" />
        <OutPort y={866} net={BLUE} t="Vsamn" />
        <Wire c={MAGENTA} d="M1988.5 308V349" />
        <Wire c={BLUE} d="M1988.5 867V921" />
        <circle cx="1838" cy="607" r="6" fill={SKY} stroke="none" />
        <rect x="1960.500" y="921.500" width="55" height="81" fill="none" stroke="#fff" />
      </g>
    </svg>
  </div>
);

/* ---------- waveform window ---------- */

const X0 = 236;
const NS = 23.883;
const STRIP = 62;

const traces = [
  { name: "/VCOP", color: "#d6e3ff", hi: "860.0", lo: "140.0" },
  { name: "/I26/net9", color: RED, hi: "395.0", lo: "-38.96" },
  { name: "/Vsamp", color: GREEN, hi: "391.9", lo: "-32.41" },
  { name: "/Ref", color: MAGENTA, hi: "880.0", lo: "-80.0" },
  { name: "/I26/net7", color: CYAN, hi: "910.05", lo: "-115.32" },
  { name: "/VCON", color: PURPLE, hi: "860.0", lo: "140.0" },
  { name: "/I26/net5", color: ORANGE, hi: "398.1", lo: "-72.69" },
  { name: "/Vsamn", color: OLIVE, hi: "401.4", lo: "-195.0" },
];

const sine = (top: number, bottom: number, sign: number, gated?: number) => {
  const mid = (top + bottom) / 2;
  const amp = (bottom - top) / 2;
  let d = gated ? `M${X0}.5 ${gated - 10}V${gated}` : `M${X0} ${mid}`;
  for (let x = 0; x <= 716; x += 0.5) {
    const on = !gated || Math.floor(x / NS / 5) % 2 === 1;
    const y = on ? mid - sign * amp * Math.sin((2 * Math.PI * x) / 4.96) : gated;
    d += `L${X0 + x} ${y.toFixed(1)}`;
  }
  return d;
};

const square = (hi: number, lo: number) => {
  let d = `M${X0}.5 ${hi}V${lo}`;
  [5, 10, 15, 20, 25].forEach((t, i) => {
    d += `H${Math.round(X0 + t * NS)}.5V${i % 2 === 0 ? hi : lo}`;
  });
  return `${d}H952`;
};

const tracePaths = [
  sine(317, 359, 1),
  sine(379, 421, 1),
  sine(441, 483, 1, 465.5),
  square(503.5, 544.5),
  square(566.5, 605.5),
  sine(627, 669, -1),
  sine(689, 728, -1),
  sine(751, 785, -1, 792.5),
];

const Plot = () => {
  const ends = [0, 1, 2, 3, 4, 5, 6, 7, 8, 9, 10, 11, 12];
  let vMajor = "";
  let vMinor = "";
  for (let i = 0; i <= 60; i++) {
    const x = Math.round(X0 + i * 0.5 * NS);
    if (i % 5 === 0) vMajor += `M${x}.5 313V796`;
    else vMinor += `M${x}.5 313V796`;
  }
  let ticks = "M236 796.500H953";
  for (let i = 0; i <= 120; i++) {
    ticks += `M${Math.round(X0 + i * 0.25 * NS)}.5 797v${i % 10 === 0 ? 8 : 4}`;
  }
  return (
    <svg className="h-[572px] w-full" role="img" aria-label="Transient response traces">
      <g transform="translate(-134 -277)" shapeRendering="crispEdges" fill="none">
        <clipPath id="strips">
          <rect x="134" y="277" width="830" height="519" />
        </clipPath>

        {/* overview slider */}
        <defs>
          <linearGradient id="silver" x2="0" y2="1">
            <stop offset="0" stopColor="#f4f8fc" />
            <stop offset="1" stopColor="#8f9aa5" />
          </linearGradient>
        </defs>
        <rect x="236" y="280" width="13" height="24" fill="#4a4a4a" />
        <rect x="938" y="280" width="13" height="24" fill="#4a4a4a" />
        <path d="M244 287v8l-6-4zM941 287v8l6-4z" fill="#e00000" />
        <rect x="248" y="277" width="691" height="30" rx="4" fill="url(#silver)" />
        <rect x="260" y="281" width="667" height="22" rx="2" fill="#5f6166" stroke="#777" />
        <path d={sine(283, 301, 1)} transform="translate(40 0) scale(0.925 1)" stroke="#c8d3e8" />
        <path d="M253.5 285v14M256.500 285v14M931.500 285v14M934.500 285v14" stroke="#111" />

        <g clipPath="url(#strips)">
          <path d={vMinor} stroke="#3c3c3c" strokeDasharray="1 3" />
          <path d={vMajor} stroke="#5a5a5a" strokeDasharray="1 2" />
          {traces.map((t, k) => {
            const top = 313 + k * STRIP;
            return (
              <g key={t.name}>
                <rect x="225" y={top + 51} width="730" height="11" fill="#000" />
                <path d={`M236 ${top}.5H953M236 ${top + 50}.5H953`} stroke="#6a6a6a" strokeDasharray="1 2" />
                <path
                  d={
                    `M216 ${top}.5H224.500V${top + 50}.5H216` +
                    ends.slice(1, 10).map((n) => `M220 ${top + n * 5}.5h4`).join("")
                  }
                  stroke="#fff"
                />
                <path d={tracePaths[k]} stroke={t.color} />
                <rect x="236.500" y={top + 38.5} width="15" height="11" stroke="#8a8a8a" />
                <path d={`M242 ${top + 40}v8l5-4z`} fill="#9a9a9a" />
                <g fill="#e8e8e8" className={`${plotFont} text-[17px]`}>
                  <text x="212" y={top + 7} textAnchor="end">{t.hi}</text>
                  <text x="212" y={top + 57} textAnchor="end">{t.lo}</text>
                  <text x="151" y={top + 52} transform={`rotate(-90 151 ${top + 52})`}>V (mV)</text>
                </g>
              </g>
            );
          })}
        </g>

        <path d={ticks} stroke="#fff" />
        <g fill="#e8e8e8" className={`${plotFont} text-[17px]`} textAnchor="middle">
          {ends.map((i) => (
            <text key={i} x={Math.round(X0 + i * 2.5 * NS)} y="821">
              {(i * 2.5).toFixed(1)}
            </text>
          ))}
          <text x="592" y="841">time (ns)</text>
        </g>
      </g>
    </svg>
  );
};

const Legend = () => (
  <div className={clsx("flex w-[134px] shrink-0 flex-col overflow-hidden text-[18px] text-[#e8e8e8]", plotFont)}>
    <div className={clsx("flex h-[20px] shrink-0 bg-linear-to-b from-[#d0d0d0] to-[#9c9c9c] text-[16px] leading-[26px] text-[#333]", uiFont)}>
      <span className="w-[114px] border-r border-[#777]">Name</span>
      <span className="pl-[2px]">Vis</span>
    </div>
    <div className="flex-1 border-r-2 border-[#555]">
      <input aria-label="Filter names" className="mt-[3px] block h-[7px] w-[113px] rounded-r bg-white" />
      <ul>
        {traces.map((t, k) => (
          <li
            key={t.name}
            className={clsx(
              "flex h-[62px] border-l-4",
              k === 0 ? "border-[#ffff00]" : "border-transparent"
            )}
          >
            <span className="mt-[18px] h-[18px] w-[8px] border-b border-l border-dotted border-[#666]" />
            <span className="mt-[31px] ml-[2px] h-[11px] w-[15px] shrink-0" style={{ backgroundColor: t.color }} />
            <span className="mt-[27px] w-[75px] pl-[6px] leading-[20px] whitespace-nowrap">{t.name}</span>
            <span className="mt-[6px] flex w-[27px] shrink-0 flex-col items-end">
              <button
                type="button"
                aria-label={`Filter ${t.name}`}
                className="flex h-[18px] w-[26px] items-center justify-center border border-[#777]"
              >
                <svg viewBox="0 0 16 14" className="h-[14px] w-[16px]">
                  <path d="M0 0h16l-6 7v6l-3 1V7z" fill="#e8923c" stroke="#a35a14" />
                </svg>
              </button>
              <button type="button" aria-label={`Toggle ${t.name}`} className="mt-[7px]">
                <svg viewBox="0 0 13 10" className="h-[10px] w-[13px]">
                  <ellipse cx="6.500" cy="5" rx="6.500" ry="4.500" fill="#aebbd8" />
                  <circle cx="7" cy="5" r="3.500" fill="#4b649c" />
                  <circle cx="6" cy="4" r="1.300" fill="#fff" />
                </svg>
              </button>
            </span>
          </li>
        ))}
      </ul>
    </div>
  </div>
);

const menus: [string, string, string][] = [
  ["", "F", "ile"],
  ["", "E", "dit"],
  ["", "V", "iew"],
  ["", "G", "raph"],
  ["", "A", "xis"],
  ["", "T", "race"],
  ["", "M", "arker"],
  ["M", "e", "asurements"],
  ["T", "o", "ols"],
  ["", "W", "indow"],
  ["", "B", "rowser"],
  ["", "H", "elp"],
];

const WaveWindow = () => (
  <section className="absolute top-[80px] left-0 w-[991px] overflow-hidden rounded-tr-md border-t border-r-2 border-b-3 border-[#8d8d8d] border-r-[#c4c4c4] bg-[#efefef]">
    <header className="flex h-[29px] items-center bg-linear-to-b from-[#f4f4f2] to-[#e4e4e2]">
      <svg viewBox="0 0 12 20" className="h-[20px] w-[12px]">
        <rect width="12" height="20" fill="#b9c6de" stroke="#777" />
        <path d="M0 8l3 8 3-12 3 10 2-6" stroke="#c23" fill="none" />
      </svg>
      <h1 className="flex-1 pl-[8px] text-center font-['DejaVu_Sans',sans-serif] text-[12px] font-bold text-[#333c42]">
        Virtuoso (R) Visualization &amp; Analysis XL: SSPLL SScp_TB maestro
      </h1>
      <div className="flex h-full w-[95px] items-center justify-around rounded-bl-md bg-linear-to-b from-[#b4b4b4] to-[#c8c8c8] px-[4px]">
        {["M6 12V5H3l4-4 4 4H8v7z", "M3 8h8v4H3z", "M2 2h10v10H2zM5 5h4v4H5z", "M2 2l10 10M12 2L2 12"].map((d, i) => (
          <button key={d} type="button" aria-label={["Shade", "Minimise", "Maximise", "Close"][i]}>
            <svg viewBox="0 0 14 14" className="h-[14px] w-[14px]">
              <path d={d} stroke="#777" strokeWidth="3" fill="#777" />
              <path d={d} stroke="#fff" strokeWidth="1.500" fill="none" />
            </svg>
          </button>
        ))}
      </div>
    </header>

    <nav className="flex h-[35px] items-center border-b-4 border-[#cc0000] bg-[#f3f3f3] text-[16px] leading-[22px]">
      <div className="-ml-[4px] flex flex-1 gap-[13px]">
        {menus.map(([a, key, b]) => (
          <button key={key + b} type="button">
            {a}
            <span className="underline underline-offset-4">{key}</span>
            {b}
          </button>
        ))}
      </div>
      <div className="relative mr-[8px] mb-[6px] font-['Open_Sans',sans-serif] text-[18px] leading-[20px] font-semibold text-[#333]">
        cadence
        <span className="absolute top-[1px] left-[12px] h-[2px] w-[6px] bg-[#d33]" />
      </div>
    </nav>

    <div className={clsx("flex h-[34px]", barBg)}>
      <Group className="w-[265px]">
        <IconButton name="newWindow" />
        <MenuCaret />
        <IconButton name="newSub" />
        <MenuCaret />
        <div className="flex gap-[10px]">
          <IconButton name="folder" />
          <IconButton name="save" />
          <IconButton name="print" />
          <IconButton name="clipWave" />
          <IconButton name="wavePen" />
          <IconButton name="resize" />
        </div>
      </Group>
      <Group className="w-[195px] pl-[3px]">
        <Handle />
        <div className="ml-[5px] flex gap-[10px]">
          <IconButton name="undo" />
          <IconButton name="redo" faded />
          <IconButton name="cut" />
          <IconButton name="copy" faded />
          <IconButton name="paste" />
          <IconButton name="remove" />
        </div>
      </Group>
      <Group className="w-[317px] pl-[3px]">
        <Handle />
        <div className="ml-[4px] flex gap-[10px]">
          <IconButton name="back" faded />
          <IconButton name="forward" faded />
          <IconButton name="fit" />
          <IconButton name="zoomIn" />
          <IconButton name="zoomOut" />
          <IconButton name="waves" faded />
          <IconButton name="zoomBox" />
          <IconButton name="zoomX" />
          <IconButton name="zoomY" />
          <IconButton name="zoomHand" faded />
        </div>
      </Group>
      <Group className="w-[174px] pl-[3px]">
        <Handle />
        <Combo label="Zoom group" value="family" className="w-[79px]" />
        <div className="ml-[7px] flex gap-[10px]">
          <IconButton name="cross" />
          <IconButton name="merge" />
        </div>
        <button type="button" className="ml-[14px] text-[17px] font-bold">»</button>
      </Group>
      <div className="flex flex-1 items-center gap-[2px] border-b border-[#9a9a9a] pl-[3px]">
        <Handle />
        <IconButton name="grid" pressed />
      </div>
    </div>

    <div className={clsx("flex h-[30px]", barBg)}>
      <Group className="w-[314px]">
        <span className="-ml-[3px] flex"><IconButton name="wand" pressed /></span>
        <div className="ml-[7px] flex gap-[10px]">
          <IconButton name="cards" />
          <IconButton name="rows" />
          <IconButton name="cols" />
          <IconButton name="tiles" />
        </div>
        <span className="w-[97px] pl-[5px] text-[16px]">Subwindow:</span>
        <Combo label="Subwindow" value="&nbsp;&nbsp;&nbsp;1" className="w-[68px]" />
      </Group>
      <Group className="w-[70px] pl-[3px]">
        <Handle />
        <span className="mx-[3px] flex"><IconButton name="flag" /></span>
        <IconButton name="info" pressed />
      </Group>
      <Group className="w-[349px] pl-[3px]">
        <Handle />
        <div className="mx-[6px] flex gap-[8px]">
          <IconButton name="stepLeft" faded />
          <IconButton name="stepRight" faded />
        </div>
        <Combo label="Step by" value="Data Point" className="w-[156px]" disabled />
        <input aria-label="Step size" disabled className="ml-[3px] h-[27px] w-[118px] rounded border border-[#bbb] bg-[#dfdfdf]" />
      </Group>
      <Group className="w-[38px] gap-[3px] pl-[3px]">
        <Handle />
        <IconButton name="bars" faded />
      </Group>
      <Group className="w-[40px] gap-[3px] pl-[3px]">
        <Handle />
        <IconButton name="calc" />
      </Group>
      <div className="flex flex-1 items-center border-b border-[#9a9a9a] pl-[3px]">
        <Handle />
        <span className="w-[3px]" />
        <Combo label="Layout" value="Classic" className="w-[104px]" />
        <div className="ml-[6px] flex gap-[9px]">
          <IconButton name="listSave" />
          <IconButton name="eyeRemove" />
        </div>
      </div>
    </div>

    <div className="flex h-[34px] items-end border-b-2 border-white pt-[2px]">
      <div className="flex h-full w-[136px] items-center border-t-2 border-r border-t-[#cc0000] border-r-[#aaa] bg-[#f1f1f1] pb-[2px]">
        <svg viewBox="0 0 12 14" className="mr-[5px] h-[14px] w-[12px]">
          <rect x="-3" y="1" width="14" height="12" fill="#fff" stroke="#444" />
          <path d="M1 10l7-7" stroke="#222" />
        </svg>
        <button type="button" className="flex-1 text-left text-[16px]">Window 99</button>
        <button type="button" aria-label="Close Window 99" className="pr-[10px] text-[15px] font-bold text-[#999]">×</button>
      </div>
    </div>

    <div className="mr-[4px] border-r-2 border-b-3 border-[#555] bg-black">
      <div className="border-t-2 border-r-2 border-b-2 border-dashed border-[#e8203c]">
        <div className={clsx("flex h-[32px] items-center pt-[6px] pr-[2px] pl-[3px] text-[17px] whitespace-pre text-[#e8e8e8]", plotFont)}>
          <span className="flex-1">Transient Response</span>
          <span>Fri Nov 24 09:36:35 2023   1</span>
        </div>
        <div className="flex h-[571px]">
          <Legend />
          <div className="min-w-0 flex-1 overflow-hidden">
            <Plot />
          </div>
        </div>
      </div>
    </div>

    <div className={clsx("grid h-[27px] grid-cols-[480fr_485fr_26fr] items-center border-b border-[#8d8d8d] text-[16px]", barBg)}>
      <span>mouse L:</span>
      <span>M:</span>
      <span>R:</span>
    </div>
    <footer className="flex h-[29px] items-center text-[16px] whitespace-nowrap">
      <span className="flex h-full w-[63px] items-center border-r border-[#555] bg-[#f9d6d6]">05(294)</span>
      <span className="flex-1 pl-[10px]">
        Trace: /VCOP; History: ExplorerRun.0; Test: SSPLL_SSPD_TB_1; Design Point: 1; Corner: nom
      </span>
      <span className="mr-[6px] h-[22px] w-[8px] border border-[#555] bg-[#9b9ba0]" />
    </footer>
  </section>
);

/* ---------- page ---------- */

const App = () => (
  <div className={clsx("relative flex h-screen flex-col overflow-hidden bg-[#efefef] text-[#111]", uiFont)}>
    <TopToolbar />
    <MainToolbar />
    <main className="flex min-h-0 flex-1">
      <SidePanel />
      <div className="flex min-w-0 flex-1 flex-col">
        <div className="flex h-[33px] shrink-0 border-b-4 border-[#f6f6f6]">
          <DocTab title="I26 (SSPD09)" active />
          <DocTab title="maestro" />
        </div>
        <Schematic />
      </div>
    </main>
    <div
      className={clsx(
        "grid h-[26px] shrink-0 grid-cols-[1088fr_1265fr_57fr] items-center overflow-hidden border-b-2 border-[#8d8d8d] text-[16px] whitespace-nowrap *:min-w-0",
        barBg
      )}
    >
      <span className="-ml-[16px]">mouse L: schSingleSelectPt()</span>
      <span>M: hiHelp('window "Show File" window(293))</span>
      <span>R: schHiMousePopUp()</span>
    </div>
    <footer className="grid h-[18px] shrink-0 grid-cols-[38fr_1131fr_387fr_329fr_184fr_209fr_132fr] overflow-hidden text-[16px] leading-[20px] whitespace-nowrap *:min-w-0">
      <span className="-ml-[2px] border-r border-[#555] pt-[4px]">150)</span>
      <span className="pt-[4px] pl-[9px]">&gt;</span>
      <span className="font-['Liberation_Mono',monospace] text-[10px] leading-[14px] font-bold text-[#0a3c3c]">
        bbs.eetop.cn
      </span>
      <span className="mt-[2px] flex justify-between border-l border-[#555] px-[8px] pt-[2px] whitespace-pre">
        <span>Cmd:   Conn: On  Sel: 1</span>
        <span>Status: Ready</span>
      </span>
      <span className="mt-[2px] border-l border-[#555] pt-[2px] pl-[8px]">Results: ExplorerRun.0</span>
      <span className="mt-[2px] border-l border-[#555] pt-[2px] pl-[8px]">SSPLL_SSPD_TB schematic</span>
      <span className="mt-[2px] border-l border-[#555] pt-[2px] pl-[8px]">Simulator: spectre</span>
    </footer>
    <WaveWindow />
  </div>
);

export default App;
